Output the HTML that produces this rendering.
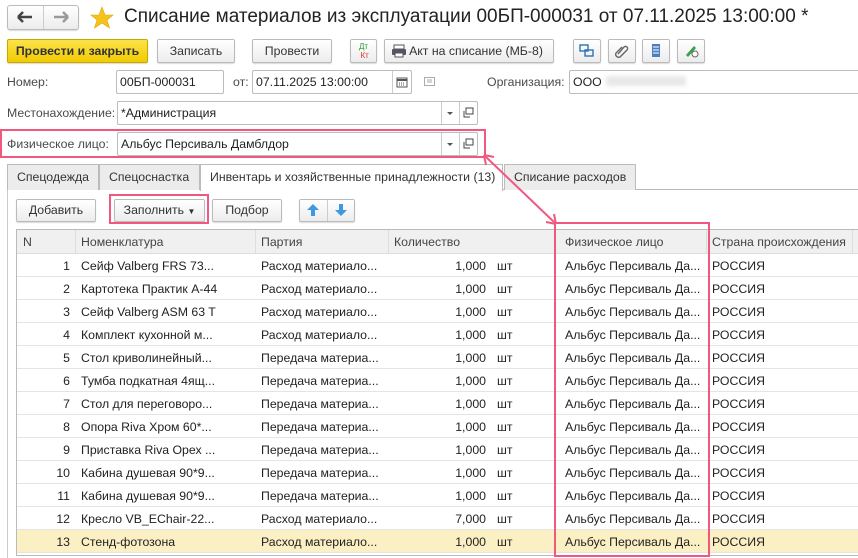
<!DOCTYPE html>
<html><head><meta charset="utf-8"><style>
*{box-sizing:border-box;margin:0;padding:0}
body{width:858px;height:558px;overflow:hidden;background:#fff;font-family:"Liberation Sans",Arial,sans-serif;font-size:12.3px;color:#333;position:relative}
.a{position:absolute}
.btn{position:absolute;height:24px;border:1px solid #bbb;border-radius:2px;background:linear-gradient(#fff,#ececec);box-shadow:0 1px 1px rgba(0,0,0,.15);text-align:center;line-height:22px;color:#333;font-size:12.3px}
.inp{position:absolute;height:24px;border:1px solid #bcbcbc;border-radius:2px;background:#fff;line-height:22px;padding-left:3px;color:#222}
.lbl{position:absolute;color:#4a4a4a;line-height:24px}
.tab{position:absolute;top:164px;height:26px;border:1px solid #bbb;border-bottom:none;background:#ececec;line-height:24px;padding-left:9px;color:#333}
.row{position:absolute;left:17px;width:841px;height:23px;border-bottom:1px solid #e4e4e4;line-height:24px;color:#222}
.row span{position:absolute;white-space:nowrap}
.pink{position:absolute;border:2px solid #f0587f}
</style></head><body>
<div class="btn" style="left:7px;top:5px;width:72px;height:25px;border-radius:3px"></div>
<div class="a" style="left:43px;top:6px;width:1px;height:23px;background:#ccc"></div>
<svg class="a" style="left:16px;top:10px" width="18" height="14"><path d="M2 7h14M2 7l5-5M2 7l5 5" stroke="#444" stroke-width="2.5" fill="none"/></svg>
<svg class="a" style="left:52px;top:10px" width="18" height="14"><path d="M2 7h14M16 7l-5-5M16 7l-5 5" stroke="#999" stroke-width="2.5" fill="none"/></svg>
<svg class="a" style="left:90px;top:6px" width="24" height="23"><polygon points="12,1 15,9 23,9 17,14 19.5,22 12,17 4.5,22 7,14 1,9 9,9" fill="#f6c21c" stroke="#e0a800" stroke-width=".6"/></svg>
<div class="a" style="left:124px;top:6px;font-size:19px;color:#222;white-space:nowrap">Списание материалов из эксплуатации 00БП-000031 от 07.11.2025 13:00:00 *</div>
<div class="btn" style="left:7px;top:39px;width:141px;background:linear-gradient(#fbe34a,#f2cb00);border-color:#c9a800;font-weight:bold;color:#333">Провести и закрыть</div>
<div class="btn" style="left:157px;top:39px;width:78px">Записать</div>
<div class="btn" style="left:252px;top:39px;width:80px">Провести</div>
<div class="btn" style="left:350px;top:39px;width:27px;font-size:8px;line-height:9px;padding-top:2px"><span style="color:#2a9a2a">Дт</span><br><span style="color:#e03030">&nbsp;Кт</span></div>
<div class="btn" style="left:384px;top:39px;width:170px;padding-left:14px">Акт на списание (МБ-8)</div>
<svg class="a" style="left:391px;top:44px" width="16" height="14"><rect x="3" y="1" width="10" height="4" fill="#fff" stroke="#555"/><rect x="1" y="5" width="14" height="6" rx="1" fill="#556"/><rect x="4" y="9" width="8" height="4" fill="#fff" stroke="#555"/></svg>
<div class="btn" style="left:573px;top:39px;width:28px"></div>
<svg class="a" style="left:579px;top:44px" width="16" height="14"><rect x="1" y="1" width="8" height="6" fill="none" stroke="#2d73b6" stroke-width="1.4"/><rect x="6" y="6" width="8" height="6" fill="none" stroke="#2d73b6" stroke-width="1.4"/></svg>
<div class="btn" style="left:608px;top:39px;width:28px"></div>
<svg class="a" style="left:614px;top:43px" width="16" height="16"><path d="M4 11l6-7a2 2 0 0 1 3 3l-7 7a3 3 0 0 1-4-4l6-6" stroke="#666" stroke-width="1.4" fill="none"/></svg>
<div class="btn" style="left:642px;top:39px;width:28px"></div>
<svg class="a" style="left:651px;top:43px" width="10" height="16"><rect x="1" y="1" width="8" height="13" fill="#4a7fc0"/><path d="M2 4h6M2 7h6M2 10h6" stroke="#fff"/></svg>
<div class="btn" style="left:677px;top:39px;width:28px"></div>
<svg class="a" style="left:683px;top:42px" width="16" height="17"><path d="M3 13l8-9 2 2-8 9z" fill="#3aa04a"/><circle cx="12" cy="12" r="3" fill="#fff" stroke="#666"/></svg>
<div class="lbl" style="left:7px;top:70px">Номер:</div>
<div class="inp" style="left:116px;top:70px;width:108px">00БП-000031</div>
<div class="lbl" style="left:233px;top:70px">от:</div>
<div class="inp" style="left:252px;top:70px;width:160px">07.11.2025 13:00:00</div>
<div class="a" style="left:392px;top:71px;width:1px;height:22px;background:#ccc"></div>
<svg class="a" style="left:396px;top:76px" width="12" height="12"><rect x="1" y="2" width="10" height="9" fill="none" stroke="#555"/><path d="M1 4h10" stroke="#555" stroke-width="2"/><path d="M3 7h6M3 9h6" stroke="#555" stroke-dasharray="1 1"/></svg>
<svg class="a" style="left:424px;top:77px" width="12" height="10"><rect x=".5" y=".5" width="10" height="8" fill="none" stroke="#aaa"/><path d="M3 3h5M3 5h5" stroke="#aaa"/></svg>
<div class="lbl" style="left:487px;top:70px">Организация:</div>
<div class="inp" style="left:569px;top:70px;width:295px">ООО<span style="display:inline-block;width:80px;height:10px;background:#e8e8e8;filter:blur(2px);margin-left:4px"></span></div>
<div class="lbl" style="left:7px;top:101px">Местонахождение:</div>
<div class="inp" style="left:117px;top:101px;width:361px">*Администрация</div>
<div class="lbl" style="left:7px;top:132px">Физическое лицо:</div>
<div class="inp" style="left:117px;top:132px;width:361px">Альбус Персиваль Дамблдор</div>
<div class="a" style="left:441px;top:102px;width:1px;height:22px;background:#ccc"></div><div class="a" style="left:459px;top:102px;width:1px;height:22px;background:#ccc"></div>
<div class="a" style="left:441px;top:133px;width:1px;height:22px;background:#ccc"></div><div class="a" style="left:459px;top:133px;width:1px;height:22px;background:#ccc"></div>
<svg class="a" style="left:446px;top:111px" width="8" height="5"><path d="M1 1h6L4 4z" fill="#555"/></svg>
<svg class="a" style="left:446px;top:142px" width="8" height="5"><path d="M1 1h6L4 4z" fill="#555"/></svg>
<svg class="a" style="left:463px;top:107px" width="11" height="11"><rect x="3" y="1" width="7" height="6" fill="none" stroke="#444"/><path d="M1 4v6h6" fill="none" stroke="#444"/></svg>
<svg class="a" style="left:463px;top:138px" width="11" height="11"><rect x="3" y="1" width="7" height="6" fill="none" stroke="#444"/><path d="M1 4v6h6" fill="none" stroke="#444"/></svg>
<div class="a" style="left:7px;top:189px;width:851px;height:1px;background:#bbb"></div>
<div class="a" style="left:7px;top:189px;width:1px;height:369px;background:#ccc"></div>
<div class="tab" style="left:7px;width:92px">Спецодежда</div>
<div class="tab" style="left:99px;width:101px">Спецоснастка</div>
<div class="tab" style="left:200px;width:303px;background:#fff;height:27px">Инвентарь и хозяйственные принадлежности (13)</div>
<div class="tab" style="left:504px;width:132px">Списание расходов</div>
<div class="btn" style="left:16px;top:199px;width:80px;height:23px;line-height:21px">Добавить</div>
<div class="btn" style="left:114px;top:199px;width:91px;height:23px;line-height:21px">Заполнить <span style="font-size:8px">▼</span></div>
<div class="btn" style="left:212px;top:199px;width:70px;height:23px;line-height:21px">Подбор</div>
<div class="btn" style="left:299px;top:199px;width:56px;height:23px"></div>
<div class="a" style="left:327px;top:200px;width:1px;height:21px;background:#ccc"></div>
<svg class="a" style="left:306px;top:203px" width="14" height="14"><path d="M7 1l6 6H9v6H5V7H1z" fill="#3d9ae0"/></svg>
<svg class="a" style="left:334px;top:203px" width="14" height="14"><path d="M7 13l6-6H9V1H5v6H1z" fill="#3d9ae0"/></svg>
<div class="a" style="left:16px;top:229px;width:842px;height:327px;border:1px solid #bbb;border-right:none"></div>
<div class="a" style="left:17px;top:230px;width:841px;height:24px;background:#f0f0f0;border-bottom:1px solid #ddd"></div>
<div class="a" style="left:17px;top:230px;height:24px;width:841px;line-height:24px;color:#444">
<span class="a" style="left:6px">N</span>
<span class="a" style="left:58px;top:0;width:1px;height:24px;background:#ddd"></span><span class="a" style="left:64px">Номенклатура</span>
<span class="a" style="left:238px;top:0;width:1px;height:24px;background:#ddd"></span><span class="a" style="left:244px">Партия</span>
<span class="a" style="left:371px;top:0;width:1px;height:24px;background:#ddd"></span><span class="a" style="left:377px">Количество</span>
<span class="a" style="left:538px;top:0;width:1px;height:24px;background:#ddd"></span><span class="a" style="left:548px">Физическое лицо</span>
<span class="a" style="left:689px;top:0;width:1px;height:24px;background:#ddd"></span><span class="a" style="left:695px">Страна происхождения</span>
<span class="a" style="left:835px;top:0;width:1px;height:24px;background:#ddd"></span>
</div>
<div class="row" style="top:254px"><span style="right:788px">1</span><span style="left:64px">Сейф Valberg FRS 73...</span><span style="left:244px">Расход материало...</span><span style="right:372px">1,000</span><span style="left:480px">шт</span><span style="left:548px">Альбус Персиваль Да...</span><span style="left:695px">РОССИЯ</span></div>
<div class="row" style="top:277px"><span style="right:788px">2</span><span style="left:64px">Картотека Практик А-44</span><span style="left:244px">Расход материало...</span><span style="right:372px">1,000</span><span style="left:480px">шт</span><span style="left:548px">Альбус Персиваль Да...</span><span style="left:695px">РОССИЯ</span></div>
<div class="row" style="top:300px"><span style="right:788px">3</span><span style="left:64px">Сейф Valberg ASM 63 T</span><span style="left:244px">Расход материало...</span><span style="right:372px">1,000</span><span style="left:480px">шт</span><span style="left:548px">Альбус Персиваль Да...</span><span style="left:695px">РОССИЯ</span></div>
<div class="row" style="top:323px"><span style="right:788px">4</span><span style="left:64px">Комплект кухонной м...</span><span style="left:244px">Расход материало...</span><span style="right:372px">1,000</span><span style="left:480px">шт</span><span style="left:548px">Альбус Персиваль Да...</span><span style="left:695px">РОССИЯ</span></div>
<div class="row" style="top:346px"><span style="right:788px">5</span><span style="left:64px">Стол криволинейный...</span><span style="left:244px">Передача материа...</span><span style="right:372px">1,000</span><span style="left:480px">шт</span><span style="left:548px">Альбус Персиваль Да...</span><span style="left:695px">РОССИЯ</span></div>
<div class="row" style="top:369px"><span style="right:788px">6</span><span style="left:64px">Тумба подкатная 4ящ...</span><span style="left:244px">Передача материа...</span><span style="right:372px">1,000</span><span style="left:480px">шт</span><span style="left:548px">Альбус Персиваль Да...</span><span style="left:695px">РОССИЯ</span></div>
<div class="row" style="top:392px"><span style="right:788px">7</span><span style="left:64px">Стол для переговоро...</span><span style="left:244px">Передача материа...</span><span style="right:372px">1,000</span><span style="left:480px">шт</span><span style="left:548px">Альбус Персиваль Да...</span><span style="left:695px">РОССИЯ</span></div>
<div class="row" style="top:415px"><span style="right:788px">8</span><span style="left:64px">Опора Riva Хром 60*...</span><span style="left:244px">Передача материа...</span><span style="right:372px">1,000</span><span style="left:480px">шт</span><span style="left:548px">Альбус Персиваль Да...</span><span style="left:695px">РОССИЯ</span></div>
<div class="row" style="top:438px"><span style="right:788px">9</span><span style="left:64px">Приставка Riva Орех ...</span><span style="left:244px">Передача материа...</span><span style="right:372px">1,000</span><span style="left:480px">шт</span><span style="left:548px">Альбус Персиваль Да...</span><span style="left:695px">РОССИЯ</span></div>
<div class="row" style="top:461px"><span style="right:788px">10</span><span style="left:64px">Кабина душевая 90*9...</span><span style="left:244px">Передача материа...</span><span style="right:372px">1,000</span><span style="left:480px">шт</span><span style="left:548px">Альбус Персиваль Да...</span><span style="left:695px">РОССИЯ</span></div>
<div class="row" style="top:484px"><span style="right:788px">11</span><span style="left:64px">Кабина душевая 90*9...</span><span style="left:244px">Передача материа...</span><span style="right:372px">1,000</span><span style="left:480px">шт</span><span style="left:548px">Альбус Персиваль Да...</span><span style="left:695px">РОССИЯ</span></div>
<div class="row" style="top:507px"><span style="right:788px">12</span><span style="left:64px">Кресло VB_EChair-22...</span><span style="left:244px">Расход материало...</span><span style="right:372px">7,000</span><span style="left:480px">шт</span><span style="left:548px">Альбус Персиваль Да...</span><span style="left:695px">РОССИЯ</span></div>
<div class="row" style="top:530px;background:#fbefc4"><span style="right:788px">13</span><span style="left:64px">Стенд-фотозона</span><span style="left:244px">Расход материало...</span><span style="right:372px">1,000</span><span style="left:480px">шт</span><span style="left:548px">Альбус Персиваль Да...</span><span style="left:695px">РОССИЯ</span></div>
<div class="pink" style="left:0;top:129px;width:486px;height:29px"></div>
<div class="pink" style="left:109px;top:194px;width:100px;height:30px"></div>
<div class="pink" style="left:554px;top:222px;width:156px;height:335px"></div>
<svg class="a" style="left:480px;top:150px" width="80" height="80"><path d="M6 7L74 72" stroke="#f0587f" stroke-width="2"/><path d="M4 5l2 10M4 5l10 2M76 74l-2-10M76 74l-10-2" stroke="#f0587f" stroke-width="2"/></svg>
</body></html>
